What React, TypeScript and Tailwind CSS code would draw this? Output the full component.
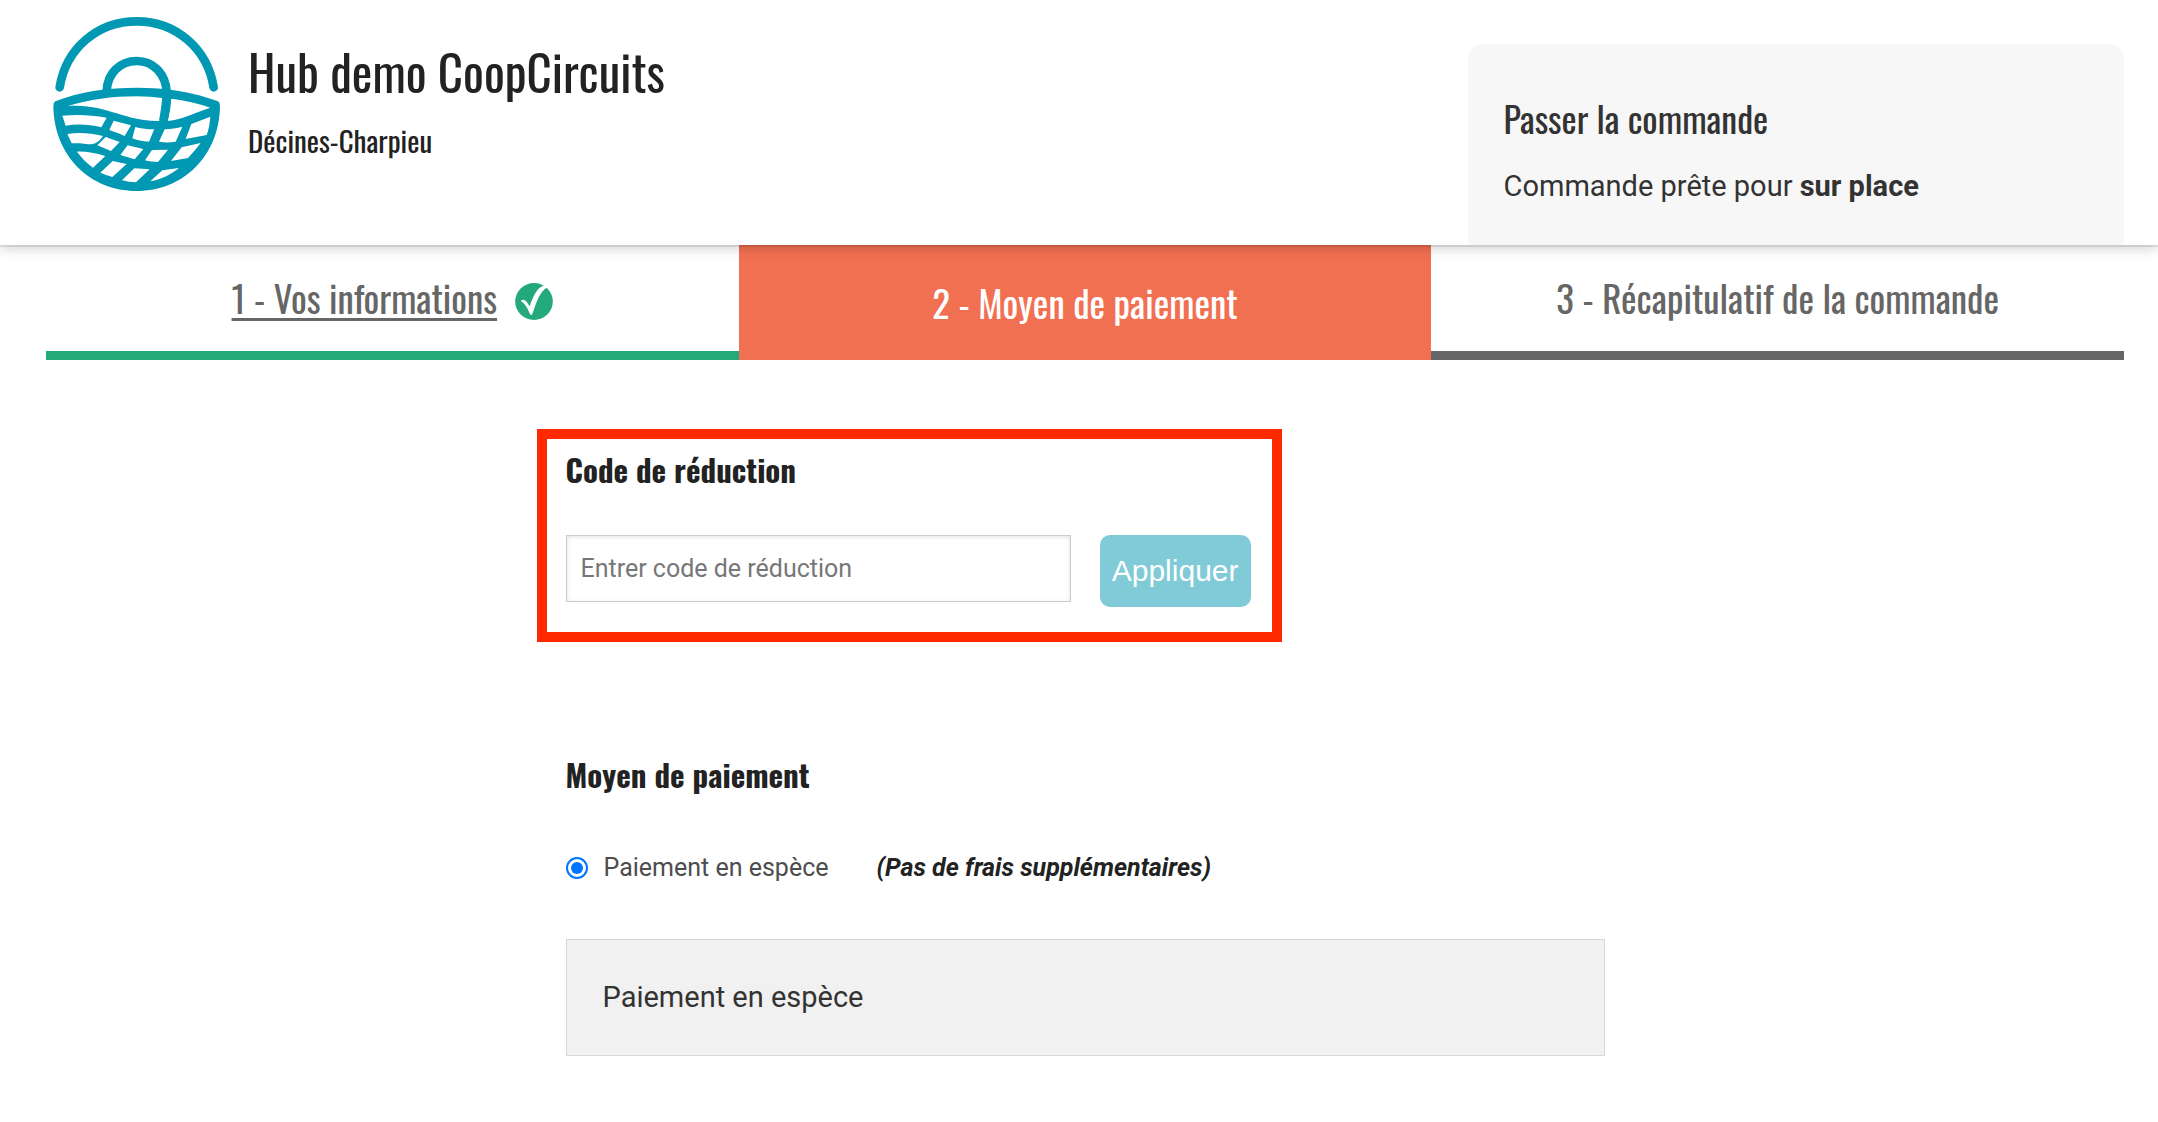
import React from "react";

const heading = "font-['Oswald','Roboto_Condensed','Liberation_Sans_Narrow','Open_Sans_Condensed',sans-serif]";

function Logo() {
  return (
    <svg viewBox="0 0 600 600" className="size-[200px] shrink-0" role="img" aria-label="CoopCircuits">
      <g fill="none" stroke="#0098b2" strokeWidth="26" strokeLinecap="round">
        <path d="M59 262C78 146 172 64 290 64S502 146 521 262" />
        <path d="M200 274C202 220 240 183 290 183S378 222 380 278C380 310 374 340 370 364" strokeLinecap="butt" />
      </g>
      <path
        fill="#0098b2"
        fillRule="evenodd"
        d="M46 304C120 274 205 263 290 263S462 276 534 304Q540 308 540 318C538 468 430 573 290 573S42 468 40 318Q40 308 46 304Z
        M82 319C150 298 215 289 290 289Q330 289 368 294Q367 330 358 363C255 366 190 308 82 319Z
        M394 296Q455 303 511 323C462 338 430 358 383 363Q392 330 394 296Z
        M67 347C112 343 155 345 200 353L184 382C148 373 113 371 77 377Z
        M82 402C118 396 155 400 189 408C176 425 168 433 146 433C125 429 110 429 95 430Z
        M111 455C140 454 165 459 196 468L159 503C139 488 124 473 111 455Z
        M221 362L273 376L254 408C238 401 224 396 208 390Z
        M197 411L239 426L213 453L172 436Z
        M286 381C307 386 322 389 343 387L327 425C307 424 290 421 277 415Z
        M263 436L310 447L284 478L241 465Z
        M374 388C393 387 410 384 427 380L407 425C390 428 374 428 357 425Z
        M336 450L384 449L354 486C339 486 327 484 315 481Z
        M454 372L511 350C509 372 506 389 500 405L437 417Z
        M425 442L482 429C468 447 457 460 444 474L393 483Z
        M218 483L260 492L217 531C204 527 192 523 181 518Z
        M283 505L329 508L288 547C273 547 260 545 246 541Z
        M367 511L417 504C395 522 366 538 331 544Z"
      />
    </svg>
  );
}

function CheckIcon() {
  return (
    <svg viewBox="0 0 114 112" className="h-[37px] w-[38px] shrink-0" aria-hidden="true">
      <ellipse cx="57" cy="56" rx="57" ry="56" fill="#24a97a" />
      <path d="M18 52Q27 48 34 56L44 70C55 38 68 10 88 8Q98 8 96 14C76 24 65 55 52 94Q50 100 44 92C37 76 30 62 18 56Z" fill="#fff" />
    </svg>
  );
}

export default function App() {
  return (
    <div className="min-h-screen bg-white font-[Roboto,sans-serif] text-[#222]">
      <header className="relative flex h-[245px] justify-between bg-white pl-10 pr-[34px] shadow-[0_2px_0_rgba(0,0,0,0.08),0_3px_12px_rgba(0,0,0,0.2)]">
        <div className="flex items-start">
          <Logo />
          <div className={`${heading} pl-2 pt-9`}>
            <h1 className="text-[49px] leading-[70px]">Hub demo CoopCircuits</h1>
            <p className="pt-2.5 text-[29px] leading-[48px]">Décines-Charpieu</p>
          </div>
        </div>
        <section className="mt-11 w-[31.5%] rounded-t-[14px] bg-[#f7f7f7] px-9 pt-12 text-[#333]">
          <h2 className={`${heading} text-[36px] leading-[52px]`}>Passer la commande</h2>
          <p className="pt-[22px] text-[29px] leading-10">
            Commande prête pour <strong>sur place</strong>
          </p>
        </section>
      </header>

      <nav className={`${heading} grid h-[115px] grid-cols-3 pl-[46px] pr-[34px] text-[37px] text-[#666]`}>
        <div className="flex items-center justify-center gap-[18px] border-b-[9px] border-[#24a97a]">
          <a href="#informations" className="underline decoration-[3px] underline-offset-4">1 - Vos informations</a>
          <span className="pt-1.5">
            <CheckIcon />
          </span>
        </div>
        <div className="flex items-center justify-center bg-[#f27052] text-white" aria-current="step">2 - Moyen de paiement</div>
        <div className="flex items-center justify-center border-b-[9px] border-[#666]">3 - Récapitulatif de la commande</div>
      </nav>

      <main className="pl-[46px] pr-[34px]">
        <form className="mx-auto w-1/2" onSubmit={(e) => e.preventDefault()}>
          <section className="-ml-[29px] mt-[69px] h-[213px] w-[745px] border-[10px] border-[#ff2a00] pl-[19px] pr-[21px] pt-1.5">
            <label htmlFor="code" className={`${heading} block text-[31px] font-bold leading-[48px]`}>Code de réduction</label>
            <div className="flex items-start justify-between pt-[42px]">
              <input
                id="code"
                type="text"
                placeholder="Entrer code de réduction"
                className="h-[67px] w-[505px] border border-[#ccc] px-[14px] text-[25px] shadow-[inset_0_1px_4px_rgba(0,0,0,0.12)] placeholder:text-[#777]"
              />
              <button type="submit" className="h-[72px] rounded-[10px] bg-[#80cbd7] px-3 pb-0.5 font-['Liberation_Sans',sans-serif] text-[30px] text-white">Appliquer</button>
            </div>
          </section>

          <h2 className={`${heading} pt-[108px] text-[31px] font-bold leading-[48px]`}>Moyen de paiement</h2>
          <div className="flex items-center pt-[52px] text-[25px] leading-9">
            <input
              id="cash"
              type="radio"
              name="payment"
              defaultChecked
              className="size-[22px] appearance-none rounded-full border-2 border-[#0075ff] bg-clip-content p-[3px] checked:bg-[#0075ff]"
            />
            <label htmlFor="cash" className="pl-4 text-[#4d4d4d]">Paiement en espèce</label>
            <em className="pl-12 font-bold">(Pas de frais supplémentaires)</em>
          </div>
          <div className="mt-[53px] border border-[#d8d8d8] bg-[#f1f1f1] px-9 py-9 text-[29px] leading-[43px] text-[#333]">Paiement en espèce</div>
        </form>
      </main>
    </div>
  );
}
